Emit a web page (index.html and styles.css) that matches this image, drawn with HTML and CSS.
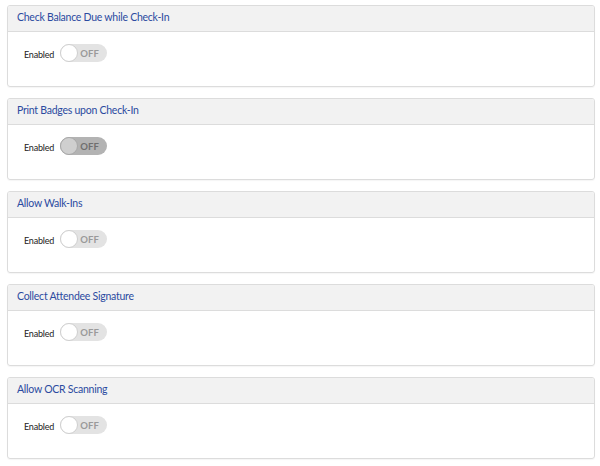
FILE: index.html
```html
<!DOCTYPE html>
<html>
<head>
<meta charset="utf-8">
<link rel="stylesheet" href="styles.css">
</head>
<body>
<div class="panel">
  <div class="panel-head">Check Balance Due while Check-In</div>
  <div class="panel-body"><span class="label">Enabled</span><span class="toggle"><span class="knob"></span><span class="off">OFF</span></span></div>
</div>
<div class="panel">
  <div class="panel-head">Print Badges upon Check-In</div>
  <div class="panel-body"><span class="label">Enabled</span><span class="toggle dark"><span class="knob"></span><span class="off">OFF</span></span></div>
</div>
<div class="panel">
  <div class="panel-head">Allow Walk-Ins</div>
  <div class="panel-body"><span class="label">Enabled</span><span class="toggle"><span class="knob"></span><span class="off">OFF</span></span></div>
</div>
<div class="panel">
  <div class="panel-head">Collect Attendee Signature</div>
  <div class="panel-body"><span class="label">Enabled</span><span class="toggle"><span class="knob"></span><span class="off">OFF</span></span></div>
</div>
<div class="panel">
  <div class="panel-head">Allow OCR Scanning</div>
  <div class="panel-body"><span class="label">Enabled</span><span class="toggle"><span class="knob"></span><span class="off">OFF</span></span></div>
</div>
</body>
</html>
```
FILE: styles.css
```css
html, body { background: #fff; }
body {
  margin: 0;
  padding: 5px 5px 0 7px;
  font-family: Lato, "Open Sans", sans-serif;
}
.panel {
  border: 1px solid #dcdcdc;
  border-radius: 3px;
  height: 80px;
  margin-bottom: 11px;
  box-shadow: 0 1px 1px rgba(0,0,0,0.04);
  overflow: hidden;
}
.panel-head {
  height: 25px;
  line-height: 22px;
  background: #f2f2f2;
  border-bottom: 1px solid #dcdcdc;
  padding-left: 9px;
  font-size: 10.5px;
  letter-spacing: -0.25px;
  color: #2b4aa0;
}
.panel-body {
  display: flex;
  align-items: center;
  padding: 12px 0 0 16px;
}
.label {
  font-size: 9px;
  letter-spacing: -0.2px;
  color: #222;
  margin-right: 6px;
  margin-top: 3px;
}
.toggle {
  position: relative;
  display: inline-flex;
  align-items: center;
  width: 47px;
  height: 18px;
  border-radius: 9px;
  background: #e3e3e3;
}
.knob {
  position: absolute;
  left: 0;
  top: 0;
  width: 16px;
  height: 16px;
  border-radius: 50%;
  background: #fff;
  border: 1px solid #cfcfcf;
}
.off {
  margin-left: 20px;
  font-size: 9.5px;
  font-weight: 700;
  color: #9a9a9a;
  letter-spacing: 0.2px;
}
.toggle.dark { background: #b3b3b3; }
.toggle.dark .knob { background: #cfcfcf; border-color: #a8a8a8; }
.toggle.dark .off { color: #6f6f6f; }
```
